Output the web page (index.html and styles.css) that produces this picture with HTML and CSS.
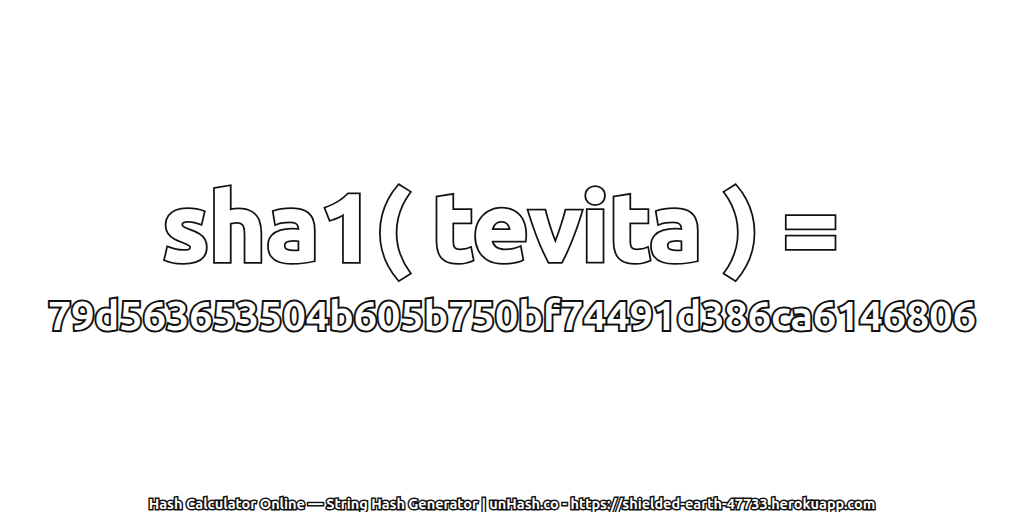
FILE: index.html
```html
<!DOCTYPE html>
<html lang="en">
<head>
    <meta charset="UTF-8">
    <title>Hash Calculator Online — String Hash Generator | unHash.co</title>
    <link rel="stylesheet" href="styles.css">
</head>
<body>
    <div class="page">
        <main class="result">
            <h1 class="title" data-text="sha1( tevita ) = ">sha1( tevita ) = </h1>
            <h2 class="hash">79d563653504b605b750bf74491d386ca6146806</h2>
        </main>
        <footer class="credit">Hash Calculator Online — String Hash Generator | unHash.co - https://shielded-earth-47733.herokuapp.com</footer>
    </div>
</body>
</html>
```

FILE: styles.css
```css
html, body {
    margin: 0;
    height: 100%;
    background-color: #ffffff;
}

.page {
    height: 512px;
    display: flex;
    flex-direction: column;
    align-items: center;
    font-family: Ubuntu, "Noto Sans", "Open Sans", sans-serif;
    color: #ffffff;
    overflow: hidden;
}

.result {
    flex: 1;
    display: flex;
    flex-direction: column;
    justify-content: center;
    align-items: center;
    padding-top: 24px;
}

.title, .hash, .credit {
    margin: 0;
    font-weight: 700;
    white-space: pre;
    -webkit-text-stroke-color: #111111;
    paint-order: stroke fill;
}

.title {
    position: relative;
    font-size: 98px;
    line-height: 110px;
    -webkit-text-stroke-width: 5.8px;
    transform: scaleY(0.967);
}

/* white layer on top so the dark outline stays thin */
.title::after {
    content: attr(data-text);
    position: absolute;
    left: 0;
    top: 0;
    -webkit-text-stroke-width: 2.2px;
    -webkit-text-stroke-color: #ffffff;
}

.hash {
    font-size: 41.3px;
    line-height: 68px;
    -webkit-text-stroke-width: 4px;
}

.credit {
    font-size: 14.5px;
    line-height: 16px;
    -webkit-text-stroke-width: 3px;
}
```
